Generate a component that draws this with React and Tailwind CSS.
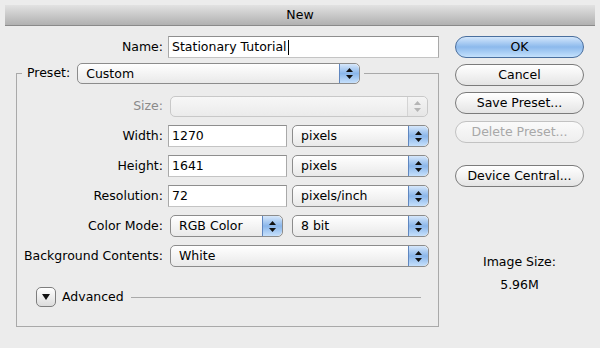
// App.jsx
// Photoshop "New" document dialog, Aqua style.

import React from "react";

const font = { fontFamily: '"DejaVu Sans", "Liberation Sans", sans-serif' };

const Stepper = ({ disabled }) => (
  <span
    className={`flex h-full w-[20px] shrink-0 flex-col items-center justify-center gap-[3px] rounded-r-[5px] border-l ${
      disabled
        ? "border-[#d4d4d4] bg-gradient-to-b from-[#f4f4f4] to-[#e6e6e6]"
        : "border-[#5f86bf] bg-gradient-to-b from-[#d6e7fa] via-[#8ab6ea] to-[#c6e0fb]"
    }`}
  >
    <svg width="7" height="4" viewBox="0 0 7 4">
      <path d="M3.5 0L7 4H0z" fill={disabled ? "#b5b5b5" : "#111"} />
    </svg>
    <svg width="7" height="4" viewBox="0 0 7 4">
      <path d="M0 0H7L3.5 4z" fill={disabled ? "#b5b5b5" : "#111"} />
    </svg>
  </span>
);

const Select = ({ value, className = "", disabled }) => (
  <div
    className={`flex h-[21px] items-stretch overflow-hidden rounded-[5px] border ${
      disabled
        ? "border-[#c8c8c8] bg-gradient-to-b from-[#f7f7f7] to-[#ebebeb]"
        : "border-[#8c8c8c] bg-gradient-to-b from-[#ffffff] to-[#e9e9e9]"
    } ${className}`}
  >
    <span className="flex-1 truncate pl-[8px] text-[12.5px] leading-[19px] text-black">
      {value}
    </span>
    <Stepper disabled={disabled} />
  </div>
);

const TextField = ({ value, className = "", caret }) => (
  <div
    className={`flex h-[22px] items-center border border-t-[#8e8e8e] border-x-[#a9a9a9] border-b-[#c4c4c4] bg-white pl-[3px] text-[12.5px] text-black ${className}`}
  >
    {value}
    {caret && <span className="ml-[1px] inline-block h-[15px] w-px bg-black" />}
  </div>
);

const Button = ({ children, primary, disabled, className = "" }) => (
  <div
    className={`flex h-[22px] w-[129px] items-center justify-center rounded-full border text-[12.5px] ${
      primary
        ? "border-[#4a6f9e] bg-gradient-to-b from-[#d3e6fb] via-[#8cb9ec] to-[#c4e1fc] text-black"
        : disabled
        ? "border-[#c2c2c2] bg-gradient-to-b from-[#fafafa] to-[#eeeeee] text-[#a8a8a8]"
        : "border-[#7b7b7b] bg-gradient-to-b from-[#ffffff] via-[#f2f2f2] to-[#e4e4e4] text-black"
    } ${className}`}
  >
    {children}
  </div>
);

const Row = ({ label, muted, children }) => (
  <div className="flex h-[22px] items-center">
    <span
      className={`w-[146px] shrink-0 text-right text-[12.5px] ${
        muted ? "text-[#8a8a8a]" : "text-black"
      }`}
    >
      {label}
    </span>
    <div className="ml-[5px] flex flex-1 items-center">{children}</div>
  </div>
);

const App = () => {
  return (
    <div className="h-[348px] w-[600px] overflow-hidden bg-[#ececec] pt-[5px]" style={font}>
      {/* Title bar */}
      <div className="mx-[5px] flex h-[21px] items-center justify-center border-b border-[#8a8a8a] bg-gradient-to-b from-[#e2e2e2] to-[#b1b1b1] text-[12.5px] text-black">
        New
      </div>

      <div className="flex">
        {/* Left side: name + preset group */}
        <div className="ml-[16px] w-[423px]">
          <div className="mt-[10px] flex h-[22px] items-center">
            <span className="w-[147px] shrink-0 text-right text-[12.5px]">Name:</span>
            <TextField value="Stationary Tutorial" caret className="ml-[5px] w-[271px]" />
          </div>

          <div className="mt-[15px] h-[254px] border border-[#a9a9a9]">
            <div className="-mt-[11px] ml-[5px] flex w-fit items-center bg-[#ececec] pr-[4px] pl-[5px]">
              <span className="text-[12.5px]">Preset:</span>
              <Select value="Custom" className="ml-[7px] w-[283px]" />
            </div>

            <div className="mt-[11px] flex flex-col gap-[8px]">
              <Row label="Size:" muted>
                <Select value="" disabled className="ml-[2px] h-[20px] w-[258px]" />
              </Row>
              <Row label="Width:">
                <TextField value="1270" className="w-[119px]" />
                <Select value="pixels" className="ml-[5px] h-[22px] w-[137px]" />
              </Row>
              <Row label="Height:">
                <TextField value="1641" className="w-[119px]" />
                <Select value="pixels" className="ml-[5px] h-[22px] w-[137px]" />
              </Row>
              <Row label="Resolution:">
                <TextField value="72" className="w-[119px]" />
                <Select value="pixels/inch" className="ml-[5px] h-[22px] w-[137px]" />
              </Row>
              <Row label="Color Mode:">
                <Select value="RGB Color" className="ml-[2px] h-[22px] w-[113px]" />
                <Select value="8 bit" className="ml-[9px] h-[22px] w-[137px]" />
              </Row>
              <Row label="Background Contents:">
                <Select value="White" className="ml-[2px] h-[22px] w-[259px]" />
              </Row>
            </div>

            {/* Advanced disclosure */}
            <div className="mt-[20px] ml-[19px] flex h-[20px] items-center">
              <span className="flex h-[20px] w-[20px] items-center justify-center rounded-[5px] border border-[#7e7e7e] bg-gradient-to-b from-[#ffffff] to-[#dcdcdc]">
                <svg width="8" height="6" viewBox="0 0 8 6">
                  <path d="M0 0H8L4 6z" fill="#111" />
                </svg>
              </span>
              <span className="ml-[6px] text-[12.5px]">Advanced</span>
              <span className="ml-[7px] mr-[17px] h-px flex-1 bg-[#a9a9a9]" />
            </div>
          </div>
        </div>

        {/* Right side: buttons + image size */}
        <div className="ml-[16px] flex flex-col items-center pt-[10px]">
          <Button primary>OK</Button>
          <Button className="mt-[6px]">Cancel</Button>
          <Button className="mt-[6px]">Save Preset...</Button>
          <Button disabled className="mt-[7px]">Delete Preset...</Button>
          <Button className="mt-[22px]">Device Central...</Button>
          <span className="mt-[66px] text-[12.5px]">Image Size:</span>
          <span className="mt-[4px] text-[12.5px]">5.96M</span>
        </div>
      </div>
    </div>
  );
};

export default App;
